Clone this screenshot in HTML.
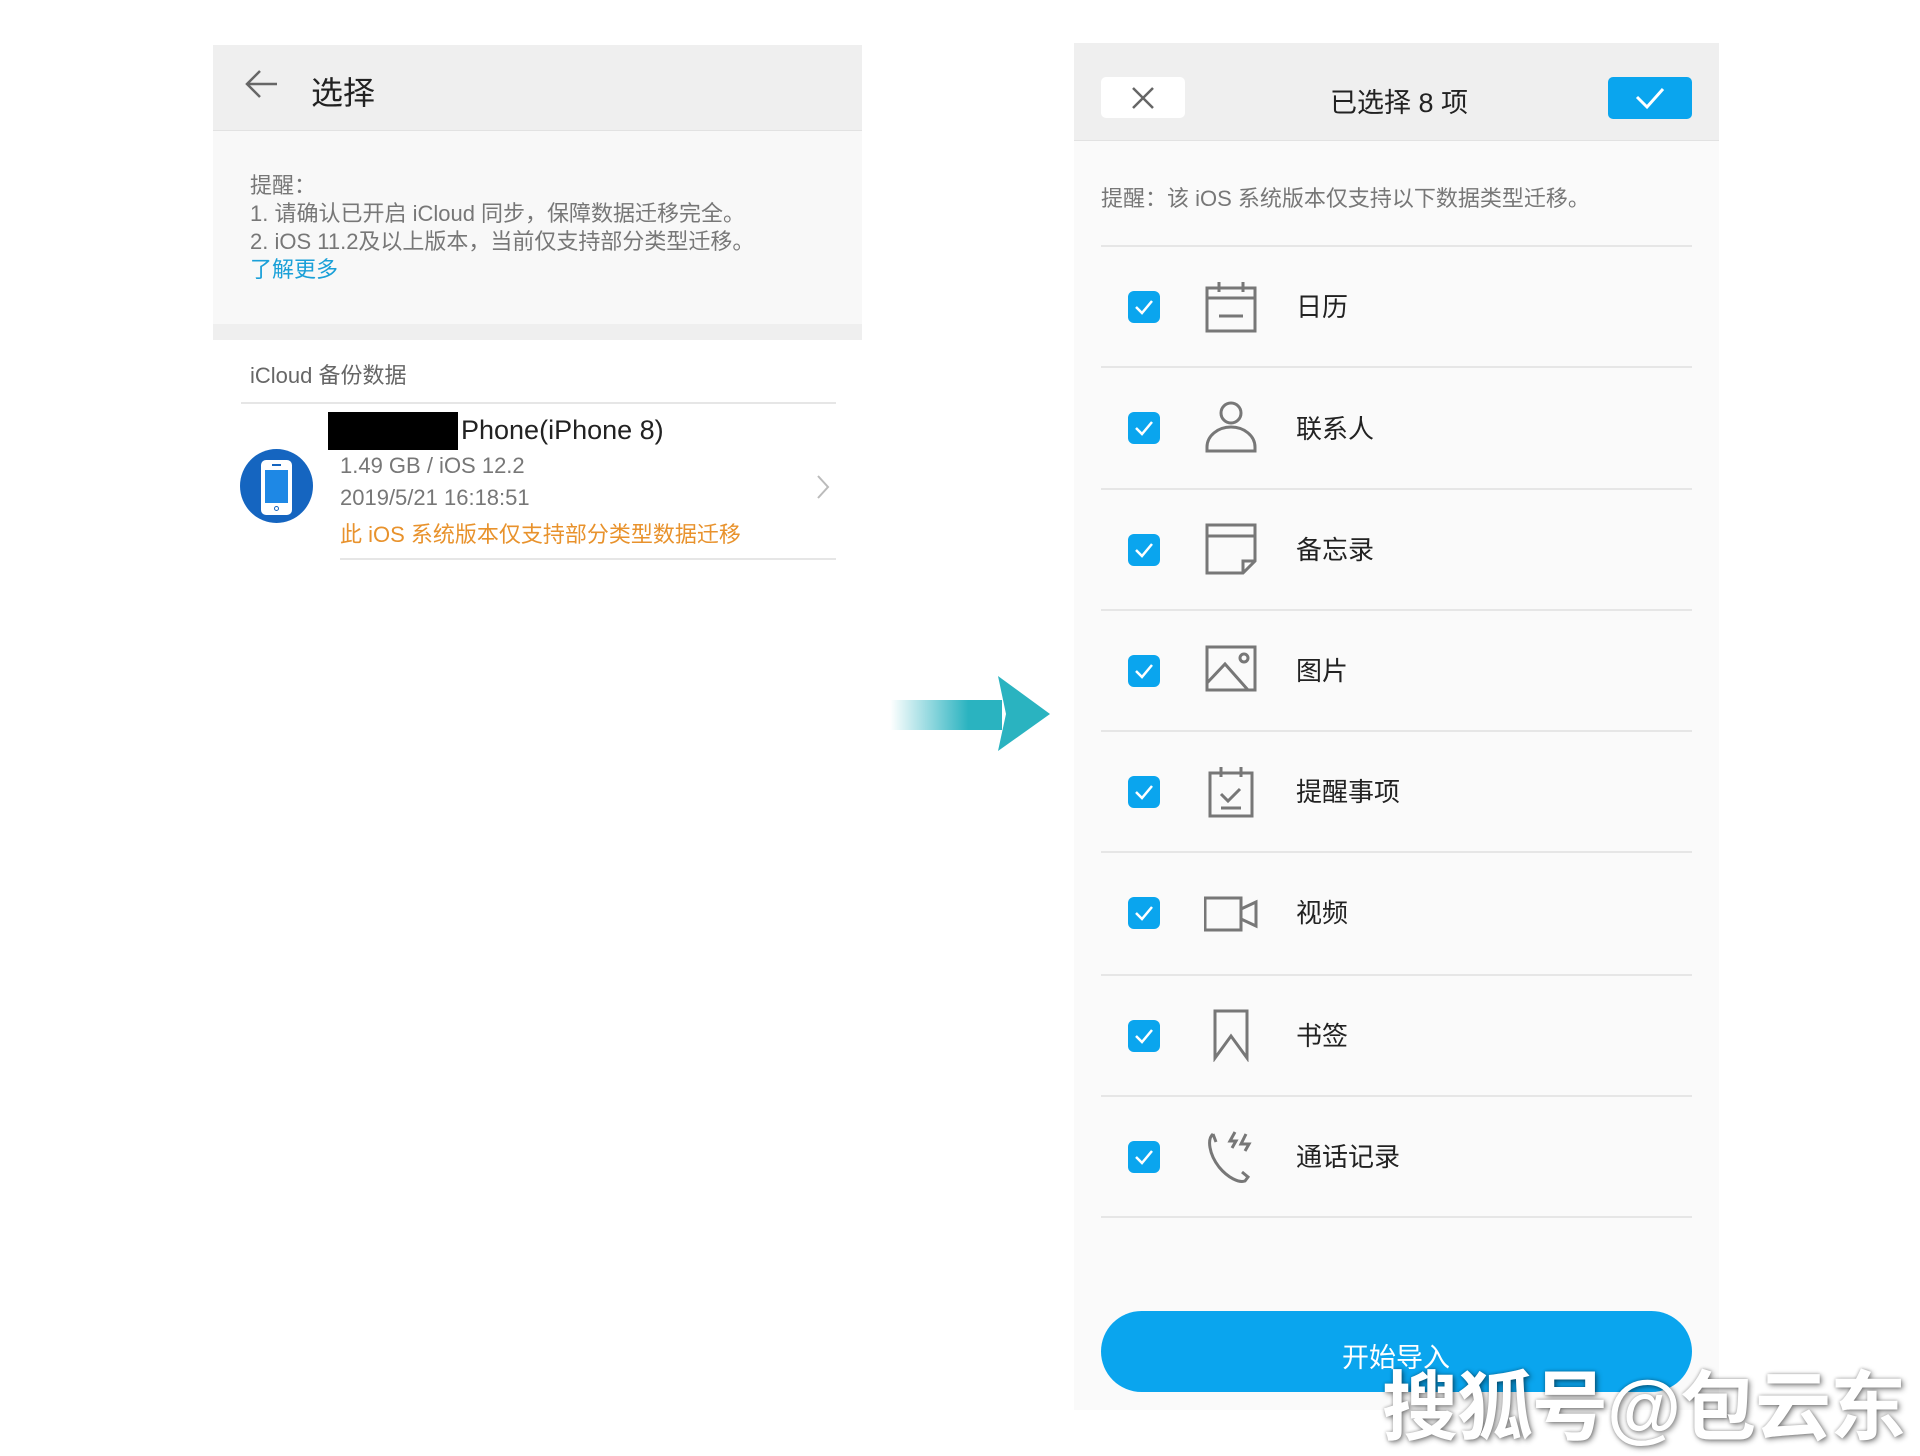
<!DOCTYPE html>
<html><head><meta charset="utf-8"><style>
*{margin:0;padding:0;box-sizing:border-box}
body{width:1920px;height:1440px;background:#fff;position:relative;overflow:hidden;font-family:"Liberation Sans","Noto Sans CJK SC",sans-serif}
.a{position:absolute;white-space:nowrap}
.div{position:absolute;height:2px;background:#e6e6e6}
.cb{position:absolute;left:1128px;width:32px;height:32px;border-radius:6px;background:#0aa5ee}
.ic{position:absolute;left:1204px;width:54px;height:54px}
.lb{position:absolute;left:1296px;font-size:26px;color:#222;line-height:30px}
</style></head><body>
<!-- left panel -->
<div class="a" style="left:213px;top:45px;width:649px;height:86px;background:#efefef;border-bottom:1px solid #e2e2e2"></div>
<svg class="a" style="left:244px;top:66px" width="36" height="36" viewBox="0 0 36 36"><path d="M33 18H4M16 5L3 18l13 13" fill="none" stroke="#666" stroke-width="2.5"/></svg>
<div class="a" style="left:311px;top:68px;font-size:32px;color:#222">选择</div>
<div class="a" style="left:213px;top:131px;width:649px;height:193px;background:#f8f8f8"></div>
<div class="a" style="left:213px;top:324px;width:649px;height:16px;background:#efefef"></div>
<div class="a" style="left:250px;top:172px;font-size:22px;line-height:28px;color:#777">提醒：<br>1. 请确认已开启 iCloud 同步，保障数据迁移完全。<br>2. iOS 11.2及以上版本，当前仅支持部分类型迁移。<br><span style="color:#1aa0d8">了解更多</span></div>
<div class="a" style="left:250px;top:358px;font-size:22px;color:#666">iCloud 备份数据</div>
<div class="div" style="left:241px;top:402px;width:595px"></div>
<div class="a" style="left:240px;top:449px;width:73px;height:74px;border-radius:50%;background:#1565c0"></div>
<div class="a" style="left:261px;top:460px;width:31px;height:55px;border-radius:5px;background:#fff"></div>
<div class="a" style="left:265px;top:470px;width:23px;height:33px;background:#1e88e5"></div>
<div class="a" style="left:272px;top:464px;width:9px;height:2px;background:#1565c0"></div>
<div class="a" style="left:274px;top:506px;width:5px;height:5px;border-radius:50%;border:1px solid #1565c0"></div>
<div class="a" style="left:328px;top:412px;width:130px;height:38px;background:#000"></div>
<div class="a" style="left:461px;top:415px;font-size:27px;color:#222">Phone(iPhone 8)</div>
<div class="a" style="left:340px;top:453px;font-size:22px;color:#777">1.49 GB / iOS 12.2</div>
<div class="a" style="left:340px;top:485px;font-size:22px;color:#777">2019/5/21 16:18:51</div>
<div class="a" style="left:340px;top:517px;font-size:22px;color:#e8922c">此 iOS 系统版本仅支持部分类型数据迁移</div>
<svg class="a" style="left:815px;top:474px" width="16" height="26"><path d="M3 2l10 11L3 24" fill="none" stroke="#bbb" stroke-width="2"/></svg>
<div class="div" style="left:340px;top:558px;width:496px"></div>
<!-- arrow -->
<svg class="a" style="left:890px;top:676px" width="162" height="76"><defs><linearGradient id="g" x1="0" x2="1"><stop offset="0" stop-color="#2ab3c0" stop-opacity="0"/><stop offset="0.7" stop-color="#2ab3c0"/></linearGradient></defs><rect x="0" y="24" width="112" height="30" fill="url(#g)"/><path d="M108 0L160 38L108 75L116 38Z" fill="#2ab3c0"/></svg>
<!-- right panel -->
<div class="a" style="left:1074px;top:43px;width:645px;height:1367px;background:#fafafa"></div>
<div class="a" style="left:1074px;top:43px;width:645px;height:98px;background:#efefef;border-bottom:1px solid #e2e2e2"></div>
<div class="a" style="left:1101px;top:77px;width:84px;height:41px;background:#fff;border-radius:5px"></div>
<svg class="a" style="left:1130px;top:85px" width="26" height="26"><path d="M3 3l20 20M23 3L3 23" stroke="#666" stroke-width="2.5"/></svg>
<div class="a" style="left:1330px;top:81px;font-size:27px;color:#222">已选择 8 项</div>
<div class="a" style="left:1608px;top:77px;width:84px;height:42px;background:#0aa5ee;border-radius:5px"></div>
<svg class="a" style="left:1634px;top:86px" width="32" height="24"><path d="M3 11l10 10L29 3" fill="none" stroke="#fff" stroke-width="3"/></svg>
<div class="a" style="left:1101px;top:181px;font-size:22px;color:#777">提醒：该 iOS 系统版本仅支持以下数据类型迁移。</div>
<div class="div" style="left:1101px;top:245px;width:591px"></div>
<div class="div" style="left:1101px;top:366px;width:591px"></div>
<div class="div" style="left:1101px;top:488px;width:591px"></div>
<div class="div" style="left:1101px;top:609px;width:591px"></div>
<div class="div" style="left:1101px;top:730px;width:591px"></div>
<div class="div" style="left:1101px;top:851px;width:591px"></div>
<div class="div" style="left:1101px;top:974px;width:591px"></div>
<div class="div" style="left:1101px;top:1095px;width:591px"></div>
<div class="div" style="left:1101px;top:1216px;width:591px"></div>
<!-- checkboxes -->
<svg width="0" height="0" style="position:absolute"><defs><symbol id="ck" viewBox="0 0 32 32"><path d="M8 16l6 6L24 10" fill="none" stroke="#fff" stroke-width="2.5"/></symbol></defs></svg>
<div class="cb" style="top:291px"><svg width="32" height="32"><use href="#ck"/></svg></div>
<div class="cb" style="top:412px"><svg width="32" height="32"><use href="#ck"/></svg></div>
<div class="cb" style="top:534px"><svg width="32" height="32"><use href="#ck"/></svg></div>
<div class="cb" style="top:655px"><svg width="32" height="32"><use href="#ck"/></svg></div>
<div class="cb" style="top:776px"><svg width="32" height="32"><use href="#ck"/></svg></div>
<div class="cb" style="top:897px"><svg width="32" height="32"><use href="#ck"/></svg></div>
<div class="cb" style="top:1020px"><svg width="32" height="32"><use href="#ck"/></svg></div>
<div class="cb" style="top:1141px"><svg width="32" height="32"><use href="#ck"/></svg></div>
<!-- icons -->
<svg class="ic" style="top:280px" viewBox="0 0 54 54" fill="none" stroke="#777" stroke-width="3"><rect x="3" y="8" width="48" height="43"/><path d="M3 18h48M15 2v10M39 2v10M15 36h24"/></svg>
<svg class="ic" style="top:400px" viewBox="0 0 54 54" fill="none" stroke="#777" stroke-width="3"><circle cx="27" cy="13" r="10"/><path d="M3 51v-4a24 20 0 0 1 48 0v4z"/></svg>
<svg class="ic" style="top:522px" viewBox="0 0 54 54" fill="none" stroke="#777" stroke-width="3"><path d="M3 3h48v36L39 51H3zM3 14h48M51 39H39v12"/></svg>
<svg class="ic" style="top:643px" viewBox="0 0 54 54" fill="none" stroke="#777" stroke-width="3"><rect x="3" y="4" width="48" height="43"/><path d="M3 40l18-19 23 26"/><circle cx="40" cy="15" r="4"/></svg>
<svg class="ic" style="top:764px" viewBox="0 0 54 54" fill="none" stroke="#777" stroke-width="3"><rect x="6" y="9" width="42" height="43"/><path d="M17 3v10M37 3v10M17 30l7 7 12-12M17 44h20"/></svg>
<svg class="ic" style="top:885px" viewBox="0 0 54 54" fill="none" stroke="#777" stroke-width="3"><rect x="1" y="13" width="36" height="32"/><path d="M37 24l15-7v24l-15-7"/></svg>
<svg class="ic" style="top:1008px" viewBox="0 0 54 54" fill="none" stroke="#777" stroke-width="3"><path d="M11 3h32v47L27 28 11 50z"/></svg>
<svg class="ic" style="top:1129px" viewBox="0 0 54 54" fill="none" stroke="#777" stroke-width="3"><path d="M9 5C3 10 5 25 15 38c9 11 20 16 26 14l3-4-6-5M9 5l3 8M31 3l-5 9h6l-4 7M42 5l-5 10h8l-4 7"/></svg>
<div class="lb" style="top:292px">日历</div>
<div class="lb" style="top:414px">联系人</div>
<div class="lb" style="top:535px">备忘录</div>
<div class="lb" style="top:656px">图片</div>
<div class="lb" style="top:777px">提醒事项</div>
<div class="lb" style="top:898px">视频</div>
<div class="lb" style="top:1021px">书签</div>
<div class="lb" style="top:1142px">通话记录</div>
<div class="a" style="left:1101px;top:1311px;width:591px;height:81px;border-radius:41px;background:#0aa5ee"></div>
<div class="a" style="left:1342px;top:1336px;font-size:27px;color:#fff">开始导入</div>
<div class="a" style="left:1382px;top:1346px;font-size:76px;font-weight:bold;color:#fff;letter-spacing:-1px;text-shadow:2px 2px 6px rgba(0,0,0,.45),0 0 3px rgba(0,0,0,.3)">搜狐号@包云东</div>
</body></html>
